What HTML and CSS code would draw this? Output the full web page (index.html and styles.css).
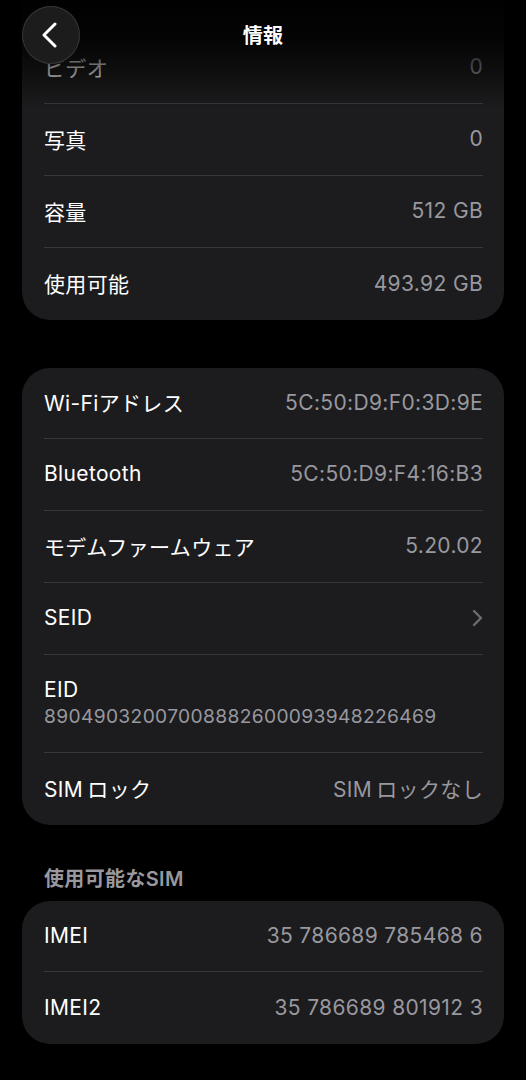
FILE: index.html
```html
<!DOCTYPE html>
<html lang="ja">
<head>
<meta charset="UTF-8">
<link rel="stylesheet" href="styles.css">
</head>
<body>
 <div class="navbar">
   <div class="back-btn">
     <svg width="20" height="26" viewBox="0 0 20 26"><path d="M15 2 L4 13 L15 24" fill="none" stroke="#fff" stroke-width="3" stroke-linecap="round" stroke-linejoin="round"/></svg>
   </div>
   <div class="nav-title">情報</div>
 </div>

 <div class="content">
   <div class="card card-first">
     <div class="row"><span class="label">ビデオ</span><span class="value">0</span></div>
     <div class="row"><span class="label">写真</span><span class="value">0</span></div>
     <div class="row"><span class="label">容量</span><span class="value">512 GB</span></div>
     <div class="row"><span class="label">使用可能</span><span class="value">493.92 GB</span></div>
   </div>

   <div class="card">
     <div class="row"><span class="label">Wi-Fiアドレス</span><span class="value">5C:50:D9:F0:3D:9E</span></div>
     <div class="row"><span class="label">Bluetooth</span><span class="value">5C:50:D9:F4:16:B3</span></div>
     <div class="row"><span class="label">モデムファームウェア</span><span class="value">5.20.02</span></div>
     <div class="row"><span class="label">SEID</span>
       <svg class="chevron" width="11" height="18" viewBox="0 0 11 18"><path d="M2 2 L9 9 L2 16" fill="none" stroke="#6c6c70" stroke-width="2.4" stroke-linecap="round" stroke-linejoin="round"/></svg>
     </div>
     <div class="row row-stack"><span class="label">EID</span><span class="value">89049032007008882600093948226469</span></div>
     <div class="row"><span class="label">SIM&thinsp;ロック</span><span class="value">SIM&thinsp;ロックなし</span></div>
   </div>

   <div class="section-head">使用可能なSIM</div>
   <div class="card card-sim">
     <div class="row"><span class="label">IMEI</span><span class="value">35 786689 785468 6</span></div>
     <div class="row"><span class="label">IMEI2</span><span class="value">35 786689 801912 3</span></div>
   </div>
 </div>
</body>
</html>
```

FILE: styles.css
```css
body {
  margin: 0;
  background: #000;
  color: #fff;
  font-family: Inter, "Noto Sans CJK JP", sans-serif;
  font-size: 21px;
  letter-spacing: 0.35px;
  height: 1080px;
  overflow: hidden;
}

.navbar {
  position: absolute;
  top: 0;
  left: 0;
  right: 0;
  height: 110px;
  background: linear-gradient(to bottom, rgba(0,0,0,0.97) 0px, rgba(0,0,0,0.85) 40px, rgba(0,0,0,0.45) 75px, rgba(0,0,0,0) 108px);
  z-index: 2;
}

.back-btn {
  position: absolute;
  left: 22px;
  top: 6px;
  width: 58px;
  height: 58px;
  border-radius: 50%;
  background: #1c1c1c;
  box-shadow: inset 0 0 0 1px #353535;
  display: flex;
  align-items: center;
  justify-content: center;
}

.back-btn svg {
  margin-left: -3px;
}

.nav-title {
  position: absolute;
  left: 0;
  right: 0;
  top: 22px;
  text-align: center;
  font-size: 20px;
  font-weight: 700;
  line-height: 28px;
}

.content {
  padding: 0 22px;
}

.card {
  background: #1c1c1e;
  border-radius: 28px;
  margin-top: 48px;
}

.card-first {
  margin-top: -40px;
  padding-top: 72px;
  border-radius: 0 0 28px 28px;
}

.card-sim {
  margin-top: 0;
}

.row {
  height: 72px;
  box-sizing: border-box;
  margin: 0 21px 0 22px;
  border-bottom: 1px solid #38383a;
  display: flex;
  align-items: center;
  justify-content: space-between;
  padding-bottom: 2px;
}

.row:first-child {
  height: 71px;
}

.card-first .row:first-child {
  height: 72px;
}

.row:last-child {
  border-bottom: none;
}

.row-stack {
  height: 98px;
  flex-direction: column;
  align-items: flex-start;
  justify-content: center;
  gap: 2px;
}

.row-stack .value {
  font-size: 19.2px;
}

.label {
  color: #fff;
}

.value {
  color: #98989e;
}

.section-head {
  margin: 40px 0 8px 22px;
  line-height: 28px;
  font-size: 20px;
  font-weight: 600;
  color: #98989e;
}
```
